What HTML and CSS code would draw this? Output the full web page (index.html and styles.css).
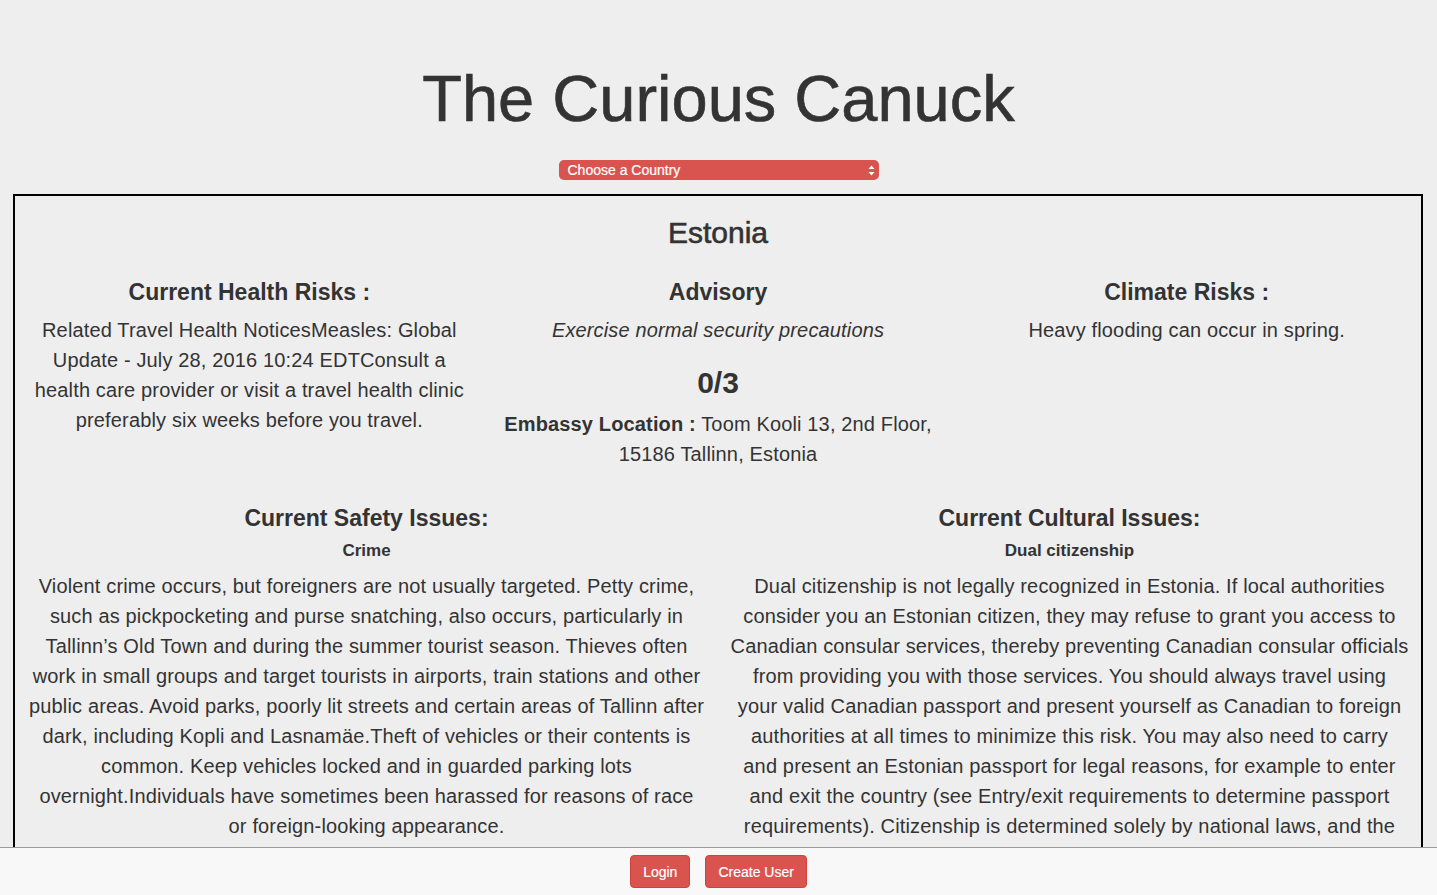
FILE: index.html
```html
<!DOCTYPE html>
<html>
<head>
<meta charset="utf-8">
<title>The Curious Canuck</title>
<link rel="stylesheet" href="styles.css">
</head>
<body>
<header class="header">
  <h1 class="title">The Curious Canuck</h1>
  <div class="select">
    <span class="select-label">Choose a Country</span>
    <svg class="select-arrows" width="7" height="11" viewBox="0 0 7 11"><path d="M3.5 0.5 L6.5 4 L0.5 4 Z M3.5 10.5 L6.5 7 L0.5 7 Z" fill="#fff"/></svg>
  </div>
</header>
<main class="panel">
  <h2 class="country">Estonia</h2>
  <div class="row three">
    <section class="col">
      <h3 class="heading">Current Health Risks :</h3>
      <p class="text lines">Related Travel Health NoticesMeasles: Global<br>Update - July 28, 2016 10:24 EDTConsult a<br>health care provider or visit a travel health clinic<br>preferably six weeks before you travel.</p>
    </section>
    <section class="col">
      <h3 class="heading">Advisory</h3>
      <p class="text italic">Exercise normal security precautions</p>
      <h2 class="score">0/3</h2>
      <p class="text lines"><strong>Embassy Location :</strong> Toom Kooli 13, 2nd Floor,<br>15186 Tallinn, Estonia</p>
    </section>
    <section class="col">
      <h3 class="heading">Climate Risks :</h3>
      <p class="text">Heavy flooding can occur in spring.</p>
    </section>
  </div>
  <div class="row two">
    <section class="col">
      <h3 class="heading">Current Safety Issues:</h3>
      <h4 class="sub">Crime</h4>
      <p class="text lines">Violent crime occurs, but foreigners are not usually targeted. Petty crime,<br>such as pickpocketing and purse snatching, also occurs, particularly in<br>Tallinn’s Old Town and during the summer tourist season. Thieves often<br>work in small groups and target tourists in airports, train stations and other<br>public areas. Avoid parks, poorly lit streets and certain areas of Tallinn after<br>dark, including Kopli and Lasnamäe.Theft of vehicles or their contents is<br>common. Keep vehicles locked and in guarded parking lots<br>overnight.Individuals have sometimes been harassed for reasons of race<br>or foreign-looking appearance.</p>
    </section>
    <section class="col">
      <h3 class="heading">Current Cultural Issues:</h3>
      <h4 class="sub">Dual citizenship</h4>
      <p class="text lines">Dual citizenship is not legally recognized in Estonia. If local authorities<br>consider you an Estonian citizen, they may refuse to grant you access to<br>Canadian consular services, thereby preventing Canadian consular officials<br>from providing you with those services. You should always travel using<br>your valid Canadian passport and present yourself as Canadian to foreign<br>authorities at all times to minimize this risk. You may also need to carry<br>and present an Estonian passport for legal reasons, for example to enter<br>and exit the country (see Entry/exit requirements to determine passport<br>requirements). Citizenship is determined solely by national laws, and the<br>decision rests solely with the national authorities of the country<br>where you are.</p>
    </section>
  </div>
</main>
<footer class="footer">
  <button class="btn">Login</button>
  <button class="btn">Create User</button>
</footer>
</body>
</html>
```

FILE: styles.css
```css
* { box-sizing: border-box; }
html, body { margin: 0; padding: 0; }
body {
  background: #eeeeee;
  color: #333333;
  font-family: "Liberation Sans", Arial, sans-serif;
  padding-bottom: 60px;
}
.header {
  padding-top: 62px;
  display: flex;
  flex-direction: column;
  align-items: center;
}
.title {
  margin: 0;
  font-size: 65px;
  line-height: 74px;
  font-weight: 400;
  color: #333;
  -webkit-text-stroke: 0.6px #333;
}
.select {
  margin-top: 24px;
  width: 320px;
  height: 20px;
  background: #d9534f;
  border-radius: 5px;
  display: flex;
  align-items: center;
  justify-content: space-between;
  padding: 0 4px 0 9px;
}
.select-label {
  color: #fff;
  font-size: 14px;
  -webkit-text-stroke: 0.2px #fff;
}
.panel {
  margin: 14px 14px 0 13px;
  border: 2px solid #000;
  padding: 0 0 20px;
}
.country {
  margin: 20px 0 10px;
  text-align: center;
  font-size: 30px;
  line-height: 33px;
  font-weight: 400;
  -webkit-text-stroke: 0.6px #333;
}
.row { display: grid; }
.three { grid-template-columns: 1fr 1fr 1fr; }
.two { grid-template-columns: 1fr 1fr; margin-top: 16px; }
.col {
  padding: 0 15px;
  text-align: center;
  min-width: 0;
}
.heading {
  margin: 20px 0 10px;
  font-size: 23px;
  line-height: 26px;
  font-weight: 700;
}
.sub {
  margin: 0 0 10px;
  font-size: 17px;
  line-height: 20px;
  font-weight: 700;
}
.text {
  margin: 0;
  font-size: 20px;
  line-height: 30px;
  font-weight: 400;
  letter-spacing: 0.15px;
}
.lines {
  white-space: nowrap;
  margin: 0 -10px;
}
.italic { font-style: italic; }
.score {
  margin: 21px 0 10px;
  font-size: 30px;
  line-height: 33px;
  font-weight: 700;
}
.footer {
  position: fixed;
  left: 0;
  right: 0;
  bottom: 0;
  height: 48px;
  background: #f8f8f8;
  border-top: 1px solid #999;
  display: flex;
  justify-content: center;
  align-items: flex-start;
  gap: 15px;
  padding-top: 7px;
}
.btn {
  background: #d9534f;
  border: 1px solid #d43f3a;
  color: #fff;
  font-family: "Liberation Sans", Arial, sans-serif;
  font-size: 14px;
  line-height: 20px;
  padding: 6px 12px;
  border-radius: 4px;
  height: 33px;
  -webkit-text-stroke: 0.2px #fff;
}
```
